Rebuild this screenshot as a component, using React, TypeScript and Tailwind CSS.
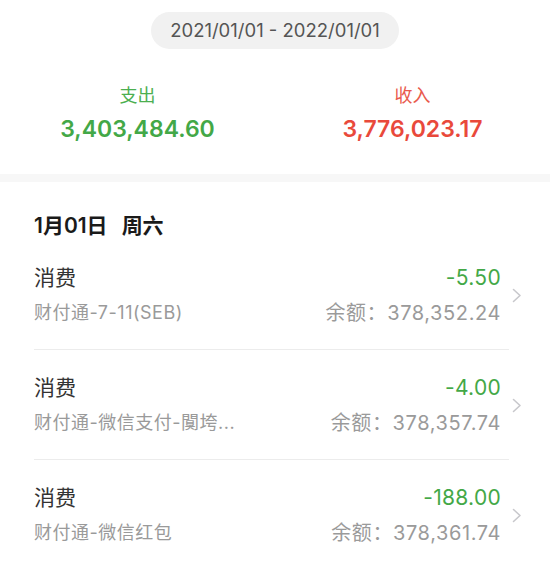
import React from "react";

type Row = { title: string; sub: string; amount: string; balance: string };

const rows: Row[] = [
  { title: "消费", sub: "财付通-7-11(SEB)", amount: "-5.50", balance: "378,352.24" },
  { title: "消费", sub: "财付通-微信支付-闃垮...", amount: "-4.00", balance: "378,357.74" },
  { title: "消费", sub: "财付通-微信红包", amount: "-188.00", balance: "378,361.74" },
];

function Chevron() {
  return (
    <svg width="10" height="15" viewBox="0 0 10 15" className="shrink-0 ml-[3px]">
      <polyline points="1.5,1.5 8,7.5 1.5,13.5" fill="none" stroke="#c8c8cc" strokeWidth="1.6" strokeLinecap="round" strokeLinejoin="round" />
    </svg>
  );
}

export default function App() {
  return (
    <div className="w-[550px] h-[563px] overflow-hidden bg-white font-['Inter','Noto_Sans_CJK_SC',sans-serif]">
      <div className="flex flex-col items-center pt-[12px] pb-[30px]">
        <div className="w-[248px] h-[37px] rounded-full bg-[#f1f1f1] flex items-center justify-center text-[18.5px] text-[#555555]">
          2021/01/01 - 2022/01/01
        </div>
        <div className="w-full grid grid-cols-2 mt-[35px]">
          <div className="flex flex-col items-center">
            <div className="leading-[24px] text-[18px] text-[#4caf50]">支出</div>
            <div className="leading-[30px] mt-[6px] text-[23px] font-semibold text-[#43a847]">3,403,484.60</div>
          </div>
          <div className="flex flex-col items-center">
            <div className="leading-[24px] text-[18px] text-[#e95a4d]">收入</div>
            <div className="leading-[30px] mt-[6px] text-[23px] font-semibold text-[#e9493b]">3,776,023.17</div>
          </div>
        </div>
      </div>
      <div className="h-[8px] bg-[#f7f7f7]" />
      <div className="h-[58px] pt-[32px] pl-[34px] leading-[24px] text-[21px] font-semibold text-[#1a1a1a]">
        1月01日<span className="ml-[14px]">周六</span>
      </div>
      {rows.map((r, i) => (
        <div key={i} className="flex items-center pl-[34px]">
          <div className="w-[475px] h-[110px] border-b border-[#ececec] pt-[24px] pr-[8px]">
            <div className="flex justify-between leading-[28px]">
              <span className="text-[21px] text-[#333333]">{r.title}</span>
              <span className="text-[21px] text-[#43a847] tracking-[0.3px]">{r.amount}</span>
            </div>
            <div className="flex justify-between leading-[26px] mt-[8px]">
              <span className="text-[18px] text-[#9a9a9a] tracking-[0.5px]">{r.sub}</span>
              <span className="text-[20px] text-[#9a9a9a] tracking-[0.6px]">余额：{r.balance}</span>
            </div>
          </div>
          <Chevron />
        </div>
      ))}
    </div>
  );
}
